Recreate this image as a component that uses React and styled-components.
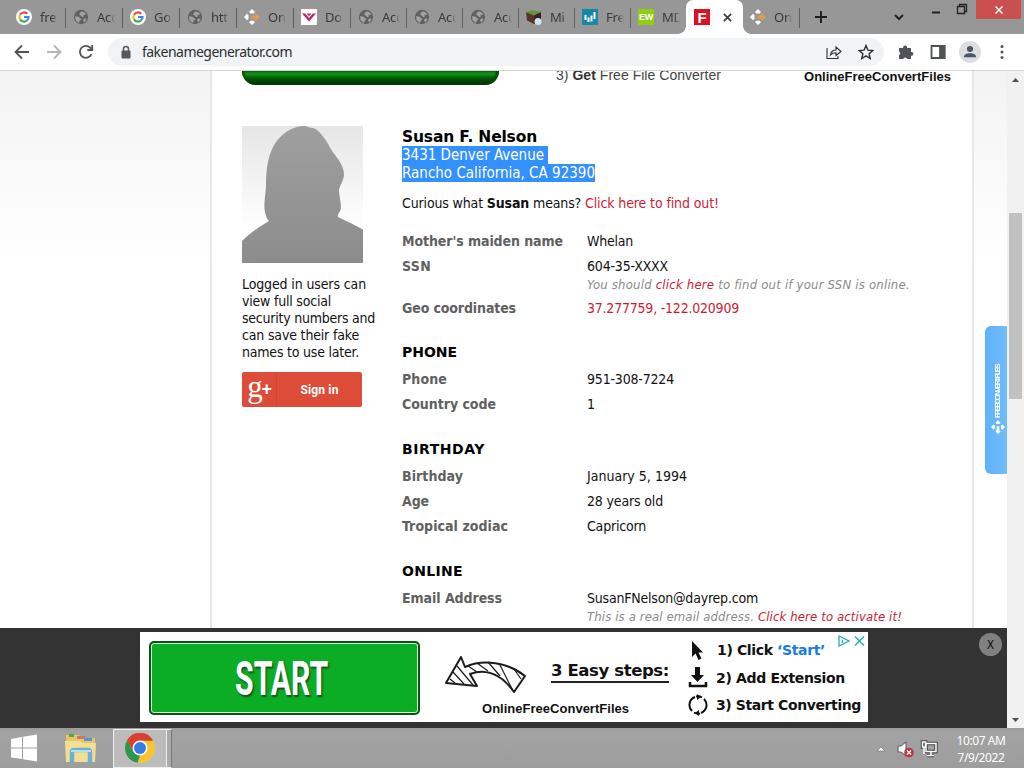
import React, { useLayoutEffect, useRef, useState } from 'react';
import styled, { createGlobalStyle } from 'styled-components';

const Global = createGlobalStyle`
  * { box-sizing: border-box; }
  html, body { margin: 0; overflow: hidden; }
  body { font-family: 'DejaVu Sans Condensed', 'DejaVu Sans', sans-serif; font-size: 14px; color: #111; }
  svg { display: block; flex: none; }
`;

/* Text whose tracking is adjusted so that it takes the given width. */
const FitSpan = styled.span`white-space: pre; display: inline-block;`;
function Fit({ w, children, ...rest }) {
  const ref = useRef(null);
  const [spacing, setSpacing] = useState(0);
  useLayoutEffect(() => {
    const el = ref.current;
    el.style.letterSpacing = '0px';
    const n = el.textContent.length;
    const s = (w - el.getBoundingClientRect().width) / n;
    el.style.letterSpacing = `${s}px`;
    setSpacing(s);
  }, [w]);
  return <FitSpan ref={ref} style={{ letterSpacing: `${spacing}px` }} {...rest}>{children}</FitSpan>;
}

const Screen = styled.div`width: 1024px; height: 768px; display: flex; flex-direction: column; overflow: hidden; background: #fff;`;

/* ---------- tab strip ---------- */
const TabStrip = styled.header`height: 34px; background: #979797; display: flex; flex: none; padding-left: 9px; font: 14px 'Noto Sans', sans-serif; color: #3a3a3a;`;
const Tab = styled.div`
  width: ${p => p.$w || 57}px; height: 34px; display: flex; align-items: center; padding-left: 7px; position: relative; flex: none;
  &::after { content: ''; position: absolute; right: 0; top: 8px; height: 20px; width: 1px; background: ${p => (p.$last ? 'transparent' : '#5f5f5f')}; }
`;
const TabLabel = styled.span`margin-left: 8px; width: 24px; white-space: nowrap; font-size: 13px; letter-spacing: -.2px;
  mask-image: linear-gradient(90deg, #000 12px, transparent 18px);`;
const ActiveTab = styled.div`
  width: 57px; height: 34px; background: #fff; border-radius: 7px 7px 0 0; display: flex; align-items: center; gap: 13px; padding-left: 8px; position: relative; flex: none;
  &::before, &::after { content: ''; position: absolute; bottom: 0; width: 8px; height: 8px; }
  &::before { left: -8px; background: radial-gradient(circle at 0 0, transparent 7.5px, #fff 8px); }
  &::after { right: -8px; background: radial-gradient(circle at 100% 0, transparent 7.5px, #fff 8px); }
`;
const NewTab = styled.div`padding: 11px 0 0 15px;`;
const WindowButtons = styled.div`margin-left: auto; display: flex; align-items: flex-start;`;
const CloseWindow = styled.div`width: 45px; height: 19px; margin-right: 3px; background: #c9504f; display: flex; align-items: center; justify-content: center;`;
const FIcon = styled.div`width: 16px; height: 16px; background: ${p => p.$bg}; color: #fff; display: grid; place-items: center; font: bold ${p => p.$size}px 'Liberation Sans', sans-serif; letter-spacing: -.3px;`;

const Google = () => (
  <svg width="16" height="16" viewBox="0 0 16 16"><circle cx="8" cy="8" r="8" fill="#fff" />
    <g fill="none" strokeWidth="2.1"><path d="M11.3 4.8A4.6 4.6 0 0 0 4 5.8" stroke="#ea4335" /><path d="M4 5.8a4.6 4.6 0 0 0 0 4.4" stroke="#fbbc05" /><path d="M4 10.2a4.6 4.6 0 0 0 7 1.3" stroke="#34a853" /><path d="M11 11.5A4.6 4.6 0 0 0 12.6 8H8" stroke="#4285f4" /></g></svg>
);
const Globe = () => (
  <svg width="16" height="16" viewBox="0 0 16 16"><circle cx="8" cy="8" r="7.2" fill="#626262" />
    <path d="M2.2 7.2c2 .5 3.200 0 4 1.200s2 .3 2 1.600-1.700 1-1.700 2.200c0 .8-.5 1.300-1 1.500A6.200 6.200 0 0 1 2.200 7.200zM8 2.500c2-.2 4.200.8 5.200 2.800-1 .8-1.500 0-2.300.6-.9.800.4 1.600-.8 2.100s-1.500-1.200-2.600-1.500-1.800-1-.9-1.900S7.300 3.500 8 2.500zM11 9.700c1-.5 2-.2 2.600.3-.4 1.300-1.500 2.600-2.700 3.200-.8-1-.9-2.900.1-3.500z" fill="#a2a2a2" /></svg>
);
const Converter = () => (
  <svg width="16" height="16" viewBox="0 0 16 16"><path d="M8 0l3 3-1.500 1.600h-3L5 3zM0 8l3-3.300 1.500 1.500v3.600L3 11.300zM8 16l-3-2.700 1.500-1.600h3l1.500 1.600z" fill="#fff" /><path d="M16 8l-4.500 4.200-1-2.500H7.500V6.500h3l1-2.700z" fill="#dd9c4f" /></svg>
);
const DocIcon = () => (
  <svg width="16" height="16" viewBox="0 0 16 16"><path fill="#fff" d="M0 0h16v16H0z" /><path d="M1 4.500h3.200L8 9l3.800-4.500H15l-7 8zM5.500 4.500h5L8 7.200z" fill="#c0266f" /></svg>
);
const Block = () => (
  <svg width="16" height="16" viewBox="0 0 16 16"><path d="M0 3l8 3v9L1 11.500z" fill="#5b3427" /><path d="M8 6l7-3v9l-7 3z" fill="#37221c" /><path d="M0 3l6-2 9 2-7 3.500z" fill="#62963c" /><circle cx="12" cy="12.500" r="3.500" fill="#c9eaf6" /></svg>
);
const Chart = () => (
  <svg width="16" height="16" viewBox="0 0 16 16"><path fill="#1687a7" d="M0 0h16v16H0z" /><path d="M3.500 6v5M6.500 8.500v4.500M9.500 6.500v6M12.500 3v7" stroke="#fff" strokeWidth="2" /></svg>
);

const tabs = [[Google, 'fre'], [Globe, 'Acc'], [Google, 'Go'], [Globe, 'htt'], [Converter, 'On'], [DocIcon, 'Do'], [Globe, 'Acc'], [Globe, 'Acc'], [Globe, 'Acc'], [Block, 'Mi'], [Chart, 'Fre']];

/* ---------- toolbar ---------- */
const Toolbar = styled.nav`height: 37px; border-bottom: 1px solid #d5d5d5; display: flex; align-items: center; flex: none; background: #fff; color: #505357;`;
const NavIcons = styled.div`display: flex; gap: 16px; padding-left: 14px; width: 108px;`;
const Omnibox = styled.div`width: 776px; height: 28px; border-radius: 14px; background: #f1f3f4; display: flex; align-items: center; padding: 0 10px 0 12px; font: 14px 'Noto Sans', sans-serif; color: #2c2e31;`;
const Url = styled.div`margin: -1px 0 0 10px; flex: 1;`;
const OmniIcons = styled.div`display: flex; gap: 16px;`;
const ToolIcons = styled.div`display: flex; align-items: center; margin-left: 14px; gap: 16px;`;
const Avatar = styled.div`width: 22px; height: 22px; border-radius: 50%; background: #dadde2; display: grid; place-items: center; margin: 0 -3px;`;

/* ---------- page ---------- */
const Viewport = styled.div`height: 657px; display: flex; flex: none;`;
const Page = styled.div`width: 1007px; display: flex; flex-direction: column; position: relative;`;
const Canvas = styled.div`height: 557px; padding-left: 210px; background: linear-gradient(#f3f3f3, #fff 190px); overflow: hidden;`;
const Sheet = styled.main`width: 764px; height: 557px; border: solid #e8e8e8; border-width: 0 2px; background: #fff; padding-left: 30px; display: flex; flex-direction: column; overflow: hidden;`;
const TopAd = styled.div`height: 55px; display: flex; align-items: flex-start; font: 14px 'Liberation Sans', sans-serif; color: #444; flex: none;`;
const AdPill = styled.div`width: 257px; height: 14px; border-radius: 0 0 17px 17px; background: linear-gradient(#118a17 0 4px, #056409 6px, #034b06 9px, #022e04); box-shadow: inset 2px 0 2px #034b06, inset -3px 0 2px #034b06; flex: none;`;
const AdStep = styled.div`margin: -4px 0 0 57px; width: 248px; line-height: 17px; b { color: #333; }`;
const AdBrand = styled.div`margin-top: -3px; line-height: 17px; font-weight: bold; font-size: 13px; color: #111;`;
const Columns = styled.div`display: flex;`;
const Side = styled.aside`width: 160px; flex: none;`;
const LoginText = styled.p`margin: 13px 0 11px; line-height: 17px;`;
const SignIn = styled.button`width: 120px; height: 35px; border: 0; border-radius: 2px; padding: 0; background: #dd4b39; color: #fff; display: flex; font: bold 12px Roboto, sans-serif; align-items: stretch;`;
const GPlus = styled.span`width: 35px; border-right: 1px solid #d04536; display: flex; align-items: center; justify-content: center; font: 31px 'Liberation Serif', serif; line-height: 25px; padding: 0 0 7px 1px;
  b { font: 500 18px Roboto, sans-serif; margin: 4px 0 0 -1px; }`;
const SignLabel = styled.span`flex: 1; display: grid; place-items: center;`;
const Details = styled.section`padding-top: 2px;`;
const Name = styled.h3`margin: 0; font: bold 15.5px/18px 'DejaVu Sans', sans-serif; height: 18px; color: #000;`;
const Selected = styled.div`height: 18px; line-height: 18px; font-size: 15px; width: ${p => p.$w}px; background: #3390ff; color: #fff;`;
const Curious = styled.div`margin: 11px 0 16px; height: 20px; line-height: 20px;`;
const Link = styled.span`color: #cb1c35;`;
const Row = styled.div`display: flex; line-height: 25px; height: ${p => (p.$tall ? 42 : 25)}px;`;
const Term = styled.div`width: 185px; color: #606060; font-weight: bold;`;
const Note = styled.div`margin-top: -4px; line-height: 19px; font-size: 13px; font-style: italic; color: #8b8b8b;`;
const Heading = styled.h4`margin: 0; height: ${p => (p.$first ? 46 : 47)}px; padding-top: ${p => (p.$first ? 21 : 22)}px; font: bold 14px/20px 'DejaVu Sans', sans-serif; color: #000;`;

const SideTab = styled.div`position: absolute; right: 0; top: 255px; width: 22px; height: 148px; border-radius: 6px 0 0 6px; background: linear-gradient(90deg, #61b2f9, #70bcff); display: flex; flex-direction: column; align-items: center; padding: 38px 0 0 3px; gap: 2px;`;
const SideText = styled.div`writing-mode: vertical-rl; transform: rotate(180deg); color: #fff; height: 54px; font: bold 8px/12px 'Liberation Sans', sans-serif; white-space: nowrap; letter-spacing: -1.9px;`;

/* ---------- bottom ad ---------- */
const AdBar = styled.div`height: 100px; background: #333; padding: 4px 0 0 140px; position: relative;`;
const AdBox = styled.div`width: 728px; height: 90px; background: #fff; display: flex; position: relative; color: #111;`;
const StartButton = styled.div`width: 271px; height: 74px; margin: 9px 0 0 9px; border: 2px solid #07580f; border-radius: 5px; background: #0aad24; box-shadow: inset 0 0 0 1px #d8f4d8; display: grid; place-items: center; overflow: hidden;`;
const StartText = styled.span`font: bold 49px/70px Roboto, sans-serif; color: #fff; transform: translate(-3px, 1px) scaleX(.615); text-shadow: 2px 2px 2px #1c4d20;`;
const AdMiddle = styled.div`width: 125px; padding: 21px 0 0 25px;`;
const BrandLine = styled.div`margin: 7px 0 0 37px; font: bold 13px/18px 'Liberation Sans', sans-serif; white-space: nowrap;`;
const Easy = styled.div`margin-top: 27px; width: 138px; padding-left: 6px; height: 26px; font: bold 16.5px/24px 'DejaVu Sans', sans-serif; span { border-bottom: 2px solid #222; line-height: 21px; }`;
const Steps = styled.div`padding: 4px 0 0 5px; font: bold 14px 'DejaVu Sans', sans-serif;`;
const Step = styled.div`height: 27.700px; display: flex; align-items: center; gap: 8px;`;
const Blue = styled.span`color: #1b7ae8;`;
const AdChoices = styled.div`position: absolute; right: 3px; top: 3px; display: flex; gap: 4px;`;
const CloseAd = styled.div`position: absolute; right: 5px; top: 5px; width: 23px; height: 23px; border-radius: 50%; background: #808080; color: #111; display: grid; place-items: center; font-size: 12px;`;

const Scroll = styled.div`width: 17px; background: #f1f1f1; display: flex; flex-direction: column; align-items: center; padding: 7px 0 6px;`;
const Thumb = styled.div`width: 13px; height: 186px; background: #c1c1c1; margin: 131px 0 auto;`;

/* ---------- taskbar ---------- */
const Taskbar = styled.footer`height: 40px; background: linear-gradient(#9b9b9b, #a3a3a3 4px, #9d9d9d); display: flex; align-items: center; flex: none; padding-left: 10px;`;
const ExplorerIcon = styled.svg`margin-left: 26px;`;
const ActiveApp = styled.div`width: 54px; height: 39px; border: 1px solid #eee; background: #bcbcbc; display: grid; place-items: center; margin-left: 16px;`;
const Stacked = styled.div`width: 5px; height: 39px; border: 1px solid #eee; border-left: 0; border-right-color: #777; background: #aaa;`;
const Tray = styled.div`margin-left: auto; display: flex; align-items: center;`;
const Clock = styled.div`width: 60px; margin: 2px 13px 0 9px; text-align: center; color: #fff; font: 12px/17px 'Noto Sans', sans-serif;`;

const S = ({ s = 16, children, ...p }) => <svg width={s} height={s} viewBox="0 0 16 16" fill="none" stroke="currentColor" strokeWidth="1.8" {...p}>{children}</svg>;

function Field({ term, tw, value, vw, note, link }) {
  return (
    <Row $tall={!!note}>
      <Term><Fit w={tw}>{term}</Fit></Term>
      <div>
        {link ? <Link><Fit w={vw}>{value}</Fit></Link> : <Fit w={vw}>{value}</Fit>}
        {note && <Note>{note}</Note>}
      </div>
    </Row>
  );
}

export default function App() {
  return (
    <Screen>
      <Global />
      <TabStrip>
        {tabs.map(([Icon, t], i) => <Tab key={i} $w={i < 6 ? 57 : 56}><Icon /><TabLabel>{t}</TabLabel></Tab>)}
        <Tab $last $w={55}><FIcon $bg="#8fce12" $size={9}>EW</FIcon><TabLabel>MD</TabLabel></Tab>
        <ActiveTab><FIcon $bg="#db1223" $size={15}>F</FIcon><S s={9} strokeWidth="3"><path d="M1.500 1.500l13 13M14.500 1.500l-13 13" /></S></ActiveTab>
        <Tab><Converter /><TabLabel>On</TabLabel></Tab>
        <NewTab><S s={12} stroke="#1c1c1c" strokeWidth="2.500"><path d="M8 0v16M0 8h16" /></S></NewTab>
        <WindowButtons>
          <svg width="82" height="34" fill="none" stroke="#222"><path d="M1 15l4 4 4-4" strokeWidth="2" /><path d="M38 12.500h8" strokeWidth="2" /><path d="M63.500 6.500h7v7h-7zM65.500 6V4.500h7v7H71" strokeWidth="1.300" /></svg>
          <CloseWindow><S s={8} stroke="#fff" strokeWidth="3"><path d="M1 1l14 14M15 1L1 15" /></S></CloseWindow>
        </WindowButtons>
      </TabStrip>

      <Toolbar>
        <NavIcons>
          <S><path d="M15 8H2M8 1.500L1.500 8 8 14.500" /></S>
          <S stroke="#b5b5b5"><path d="M1 8h13M8 1.500L14.500 8 8 14.500" /></S>
          <S><path d="M13.500 10A6 6 0 1 1 12.400 3.800L14 5.500M14.200 1v5H9.300" /></S>
        </NavIcons>
        <Omnibox>
          <svg width="12" height="14" viewBox="0 0 12 14"><path d="M2 6h8v7H2z" fill="#55585c" stroke="#55585c" /><path d="M3.500 6V4a2.500 2.500 0 0 1 5 0v2" fill="none" stroke="#55585c" strokeWidth="1.500" /></svg>
          <Url><Fit w={150}>fakenamegenerator.com</Fit></Url>
          <OmniIcons>
            <S strokeWidth="1.100"><path d="M1 4v10.500h11V12M4.500 11c.5-3.500 2.500-5 5.500-5V3l5 4.500-5 4V8.800c-2.500 0-4 .5-5.500 2.200z" /></S>
            <S strokeWidth="1.400"><path d="M8 1.500l1.900 4.600 4.900.4-3.700 3.200 1.100 4.800L8 11.900l-4.200 2.600 1.100-4.800-3.700-3.200 4.900-.4z" /></S>
          </OmniIcons>
        </Omnibox>
        <ToolIcons>
          <S stroke="none" fill="currentColor"><path d="M1 4h4.200a2 2 0 1 1 3.800 0H13v4a1.900 1.900 0 1 1 0 3.700V15H9.200a2 2 0 0 0-3.900 0H1v-3.800a2 2 0 0 0 0-3.700z" /></S>
          <S><path d="M1.500 2h13v12h-13z" /><path d="M10 2h4.500v12H10z" fill="currentColor" /></S>
          <Avatar><S s={14} stroke="none" fill="#4a5565"><circle cx="8" cy="4.500" r="3.500" /><path d="M1 14c0-3 3-4.500 7-4.500s7 1.500 7 4.500z" /></S></Avatar>
          <S stroke="none" fill="currentColor"><circle cx="8" cy="2.500" r="1.500" /><circle cx="8" cy="8" r="1.500" /><circle cx="8" cy="13.500" r="1.500" /></S>
        </ToolIcons>
      </Toolbar>

      <Viewport>
        <Page>
          <Canvas>
            <Sheet>
              <TopAd>
                <AdPill />
                <AdStep><Fit w={165}>3) <b>Get</b> Free File Converter</Fit></AdStep>
                <AdBrand><Fit w={147}>OnlineFreeConvertFiles</Fit></AdBrand>
              </TopAd>
              <Columns>
                <Side>
                  <svg width="121" height="137" viewBox="0 0 121 137">
                    <defs><linearGradient id="bg" x2="0" y2="1"><stop stopColor="#e6e6e6" /><stop offset=".75" stopColor="#fff" /></linearGradient><linearGradient id="fg" x2="0" y2="1"><stop stopColor="#9f9f9f" /><stop offset="1" stopColor="#8c8c8c" /></linearGradient></defs>
                    <path fill="url(#bg)" d="M0 0h121v137H0z" />
                    <path fill="url(#fg)" d="M0 137v-22c8-8 17-14 27-20-4-4-5-12-4.500-19C23 69 24 64 24 58c0-14 2-27 7-37C38 8 50 0 62 0c3 0 5 2 9 2 5 1 10 8 14 14 3 6 7 12 11 17 4 6 6 11 6 15 0 7-4 10-5 16 0 7 3 15 1.500 20-1 3-3.500 4-2.500 7 8 4 17 8 25 12.500v33.500z" />
                  </svg>
                  <LoginText>
                    <Fit w={124}>Logged in users can</Fit><br /><Fit w={89}>view full social</Fit><br /><Fit w={133}>security numbers and</Fit><br /><Fit w={117}>can save their fake</Fit><br /><Fit w={117}>names to use later.</Fit>
                  </LoginText>
                  <SignIn><GPlus>g<b>+</b></GPlus><SignLabel><Fit w={38}>Sign in</Fit></SignLabel></SignIn>
                </Side>
                <Details>
                  <Name><Fit w={135}>Susan F. Nelson</Fit></Name>
                  <Selected $w={146}><Fit w={142}>3431 Denver Avenue</Fit></Selected>
                  <Selected $w={193}><Fit w={193}>Rancho California, CA 92390</Fit></Selected>
                  <Curious><Fit w={183}>Curious what <b>Susan</b> means? </Fit><Link><Fit w={134}>Click here to find out!</Fit></Link></Curious>
                  <Field term="Mother's maiden name" tw={161} value="Whelan" vw={46} />
                  <Field term="SSN" tw={29} value="604-35-XXXX" vw={81} note={<Fit w={323}>You should <Link>click here</Link> to find out if your SSN is online.</Fit>} />
                  <Field term="Geo coordinates" tw={114} value="37.277759, -122.020909" vw={152} link />
                  <Heading $first><Fit w={55}>PHONE</Fit></Heading>
                  <Field term="Phone" tw={45} value="951-308-7224" vw={87} />
                  <Field term="Country code" tw={94} value="1" vw={8} />
                  <Heading><Fit w={83}>BIRTHDAY</Fit></Heading>
                  <Field term="Birthday" tw={61} value="January 5, 1994" vw={100} />
                  <Field term="Age" tw={27} value="28 years old" vw={76} />
                  <Field term="Tropical zodiac" tw={106} value="Capricorn" vw={59} />
                  <Heading><Fit w={61}>ONLINE</Fit></Heading>
                  <Field term="Email Address" tw={100} value="SusanFNelson@dayrep.com" vw={171} note={<Fit w={315}>This is a real email address. <Link>Click here to activate it!</Link></Fit>} />
                </Details>
              </Columns>
            </Sheet>
          </Canvas>
          <SideTab>
            <SideText>FREECONVERTFILES</SideText>
            <svg width="14" height="14" viewBox="0 0 16 16" fill="#fff"><path d="M8 0l3 3-1.500 1.600h-3L5 3zM0 8l3-3 1.500 1.500v3L3 11zM16 8l-3 3-1.500-1.500v-3L13 5zM8 16l-3-3 1.500-1.500V7h3v4.500L11 13z" /></svg>
          </SideTab>
          <AdBar>
            <AdBox>
              <StartButton><StartText>START</StartText></StartButton>
              <AdMiddle>
                <svg width="82" height="40" viewBox="0 0 82 40" fill="#fff" stroke="#1b1b1b" strokeWidth="2" strokeLinejoin="round"><path d="M1 30L16 4l4 10c18-8 43-5 60 9L69 39C57 22 42 15 25 21l7 12z" /><path d="M8 19l11 12M12 13l16 19M23 13l9 6M32 10l11 8M43 9l12 14M54 10l13 26M69 16l7 10M5 26l5 4" strokeWidth="1.200" /></svg>
                <BrandLine><Fit w={147}>OnlineFreeConvertFiles</Fit></BrandLine>
              </AdMiddle>
              <Easy><Fit w={118}>3 Easy steps:</Fit></Easy>
              <Steps>
                <Step><svg width="21" height="20" viewBox="0 0 21 20"><path d="M4 1v16l3.500-3.500 3 6.500 3-1.500-3-6H15z" fill="#111" /></svg><Fit w={108}>1) Click <Blue>‘Start’</Blue></Fit></Step>
                <Step><svg width="20" height="21" viewBox="0 0 20 21"><path d="M7 0h5v8h4l-6.500 7L3 8h4z" fill="#111" /><path d="M2 15v4h16v-4" fill="none" stroke="#111" strokeWidth="2.500" /></svg><Fit w={129}>2) Add Extension</Fit></Step>
                <Step><svg width="20" height="22" viewBox="0 0 20 22" fill="none" stroke="#111" strokeWidth="2"><path d="M7 3a8.500 8.500 0 0 0-3 14M13 19A8.500 8.500 0 0 0 16 5M8 2.500A8.500 8.500 0 0 1 14 3.500M6 18.500a8.500 8.500 0 0 0 6 1" /><path d="M9 0l4 3-4 3zM11 16l-4 3 4 3z" fill="#111" stroke="none" /></svg><Fit w={145}>3) Start Converting</Fit></Step>
              </Steps>
              <AdChoices>
                <svg width="12" height="12" viewBox="0 0 12 12" fill="none" stroke="#24abc2" strokeWidth="1.300"><path d="M1 1l10 5-10 5zM4.500 5v3" /></svg>
                <svg width="11" height="12" viewBox="0 0 11 12" stroke="#24abc2" strokeWidth="1.500"><path d="M1 1.500l9 9M10 1.500l-9 9" /></svg>
              </AdChoices>
            </AdBox>
            <CloseAd>X</CloseAd>
          </AdBar>
        </Page>
        <Scroll>
          <svg width="7" height="4"><path d="M0 4l3.500-4L7 4z" fill="#505050" /></svg>
          <Thumb />
          <svg width="7" height="4"><path d="M0 0l3.500 4L7 0z" fill="#505050" /></svg>
        </Scroll>
      </Viewport>

      <Taskbar>
        <svg width="28" height="28" viewBox="0 0 28 28" fill="#fff"><path d="M1 5l11-2v10.500H1zM13 2.800L27 .5v13H13zM1 14.500h11V25L1 23.500zM13 14.500h14v13l-14-2.200z" /></svg>
        <ExplorerIcon width="33" height="32" viewBox="0 0 33 32">
          <path d="M2 3h13l2 3h14v22H2z" fill="#e7c669" /><path d="M5 2h5v3H5z" fill="#55a546" /><path d="M13 4h8v3h-8z" fill="#c87b63" /><path d="M20 6h8v3h-8z" fill="#5d91ca" /><path d="M1 9h15l3 2h13l-1 19H2z" fill="#f4df91" />
          <path d="M8 31V20q0-2 2-2h14q2 0 2 2v11" fill="none" stroke="#69b1d6" strokeWidth="4.500" /><path d="M7 19h20" stroke="#b4e0f1" strokeWidth="2" />
        </ExplorerIcon>
        <ActiveApp>
          <svg width="30" height="30" viewBox="0 0 30 30"><circle cx="15" cy="15" r="15" fill="#f9c530" /><path d="M2 7.500A15 15 0 0 1 28 7.500H15L8.500 18.700z" fill="#d9402f" /><path d="M2 7.500l6.500 11.200L15 22.500l-2.500 7.300A15 15 0 0 1 2 7.500z" fill="#2f9650" /><path d="M2 7.500A15 15 0 0 1 28 7.500H15z" fill="#d9402f" /><circle cx="15" cy="15" r="7.500" fill="#fff" /><circle cx="15" cy="15" r="6" fill="#347be6" /></svg>
        </ActiveApp>
        <Stacked />
        <Tray>
          <svg width="66" height="20" viewBox="0 0 66 20"><path d="M1 13l4-4 4 4z" fill="#fff" stroke="#666" strokeWidth=".6" /><path d="M22 8h3l5-4v14l-5-4h-3z" fill="#fff" stroke="#555" /><circle cx="33" cy="14.500" r="4.800" fill="#c83242" /><path d="M31 12.500l4 4M35 12.500l-4 4" stroke="#fff" strokeWidth="1.500" /><g fill="none" stroke="#444" strokeWidth="3.500"><path d="M50 5.500h10v8H50zM51 17.500h7M46.500 4v5h3V4z" /></g><g fill="none" stroke="#fff" strokeWidth="1.500"><path d="M50 5.500h10v8H50zM51 17.500h7M55 14v3M46.500 4v5h3V4zM48 9v7" /></g></svg>
          <Clock><Fit w={49}>10:07 AM</Fit><br /><Fit w={47}>7/9/2022</Fit></Clock>
        </Tray>
      </Taskbar>
    </Screen>
  );
}
